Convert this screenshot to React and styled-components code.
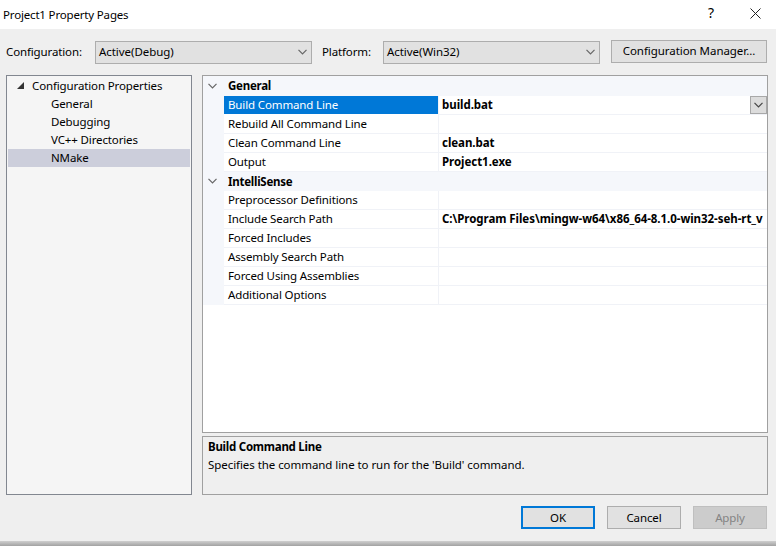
import React from 'react';
import styled, { createGlobalStyle } from 'styled-components';

const GlobalStyle = createGlobalStyle`
  html, body {
    margin: 0;
    padding: 0;
    background: #f0f0f0;
  }
  * {
    box-sizing: border-box;
  }
`;

const Dialog = styled.div`
  width: 776px;
  height: 546px;
  display: flex;
  flex-direction: column;
  overflow: hidden;
  background: #efefef;
  color: #000;
  font-family: 'Noto Sans', 'Open Sans', sans-serif;
  font-size: 11.5px;
  letter-spacing: -0.13px;
`;

const TitleBar = styled.div`
  height: 29px;
  flex: none;
  display: flex;
  align-items: center;
  padding-left: 3px;
  background: #fff;
`;

const TitleText = styled.span`
  flex: 1;
  margin-top: -1px;
  letter-spacing: -0.17px;
`;

const HelpGlyph = styled.span`
  width: 14px;
  margin-right: 32px;
  margin-top: -4px;
  text-align: center;
  font-size: 14px;
`;

const CloseGlyph = styled.svg`
  width: 11px;
  height: 11px;
  margin-right: 15px;
  margin-top: -3px;
`;

const Body = styled.div`
  flex: 1;
  display: flex;
  flex-direction: column;
  padding: 11px 8px 12px 6px;
  min-height: 0;
`;

const ConfigBar = styled.div`
  height: 24px;
  flex: none;
  display: flex;
  align-items: center;
`;

const ConfigLabel = styled.span`
  width: ${(props) => props.$width}px;
  flex: none;
  margin-top: -2px;
  padding-left: ${(props) => props.$indent || 0}px;
`;

const Select = styled.div`
  width: 217px;
  height: 23px;
  flex: none;
  display: flex;
  align-items: center;
  justify-content: space-between;
  padding: 0 4px 2px 3px;
  margin-top: 1px;
  letter-spacing: -0.05px;
  background: #e1e1e1;
  border: 1px solid #adadad;
`;

const Chevron = styled.svg`
  width: 9px;
  height: 6px;
  flex: none;
`;

const PushButton = styled.div`
  width: ${(props) => props.$width || 74}px;
  height: 23px;
  flex: none;
  display: flex;
  align-items: center;
  justify-content: center;
  background: #e1e1e1;
  border: ${(props) => (props.$primary ? '2px solid #0078d7' : '1px solid #adadad')};
  color: ${(props) => (props.$disabled ? '#838383' : '#000')};
  ${(props) => props.$disabled && 'background: #cccccc; border-color: #bfbfbf;'}
`;

const ManagerButton = styled(PushButton)`
  margin-left: 11px;
  margin-top: -1px;
  padding-bottom: 2px;
  letter-spacing: -0.05px;
`;

const Panels = styled.div`
  flex: 1;
  display: flex;
  gap: 10px;
  margin-top: 11px;
  min-height: 0;
`;

const TreePanel = styled.div`
  width: 186px;
  flex: none;
  padding: 1px;
  background: #f5f5f5;
  border: 1px solid #828790;
`;

const TreeRoot = styled.div`
  height: 18px;
  display: flex;
  align-items: center;
  padding-left: 9px;
  padding-bottom: 2px;
`;

const TreeArrow = styled.svg`
  width: 7px;
  height: 7px;
  margin-right: 8px;
`;

const TreeItem = styled.div`
  height: 18px;
  display: flex;
  align-items: center;
  padding-left: 43px;
  padding-bottom: 2px;
  background: ${(props) => (props.$selected ? '#cccedb' : 'transparent')};
`;

const RightColumn = styled.div`
  flex: 1;
  display: flex;
  flex-direction: column;
  gap: 3px;
  min-width: 0;
`;

const GridPanel = styled.div`
  height: 358px;
  flex: none;
  overflow: hidden;
  background: #fff;
  border: 1px solid #a0a0a0;
`;

const SectionRow = styled.div`
  height: ${(props) => props.$height}px;
  display: flex;
  align-items: center;
  padding-bottom: 1px;
  background: #f5f7fb;
  font-weight: 700;
  letter-spacing: -0.25px;
`;

const SectionToggle = styled.svg`
  width: 9px;
  height: 6px;
  margin-left: 5px;
  margin-right: 11px;
  flex: none;
`;

const PropRow = styled.div`
  height: 19px;
  display: flex;
  position: relative;
  background: #f5f7fb;
`;

const PropName = styled.div`
  width: 214px;
  flex: none;
  margin-left: 21px;
  padding-left: 4px;
  line-height: 17px;
  white-space: nowrap;
  background: ${(props) => (props.$selected ? '#0078d7' : '#fff')};
  color: ${(props) => (props.$selected ? '#fff' : '#000')};
  border-bottom: 1px solid ${(props) => (props.$selected ? '#fff' : '#f0f2f7')};
`;

const PropValue = styled.div`
  flex: 1;
  min-width: 0;
  padding-left: 3px;
  line-height: 17px;
  font-weight: 700;
  letter-spacing: -0.05px;
  white-space: nowrap;
  overflow: hidden;
  background: #fff;
  border-left: 1px solid #f0f2f7;
  border-bottom: 1px solid #f0f2f7;
`;

const DropButton = styled.div`
  position: absolute;
  top: 0;
  right: 0;
  width: 17px;
  height: 18px;
  display: flex;
  align-items: center;
  justify-content: center;
  background: #dcdcdc;
  border: 1px solid #a8a8a8;
`;

const DescPanel = styled.div`
  flex: 1;
  padding: 1px 5px;
  background: #efefef;
  border: 1px solid #a0a0a0;
`;

const DescTitle = styled.div`
  font-weight: 700;
  letter-spacing: -0.25px;
  line-height: 18px;
`;

const DescText = styled.div`
  line-height: 17px;
  letter-spacing: -0.06px;
`;

const Footer = styled.div`
  display: flex;
  flex: none;
  justify-content: flex-end;
  gap: 12px;
  margin-top: 11px;
  padding-right: 1px;
`;

const ShadowStrip = styled.div`
  height: 5px;
  flex: none;
  background: linear-gradient(#cfcfcf, #a2a2a2);
`;

const general = [
  { name: 'Build Command Line', value: 'build.bat', selected: true },
  { name: 'Rebuild All Command Line', value: '' },
  { name: 'Clean Command Line', value: 'clean.bat' },
  { name: 'Output', value: 'Project1.exe' },
];

const intellisense = [
  { name: 'Preprocessor Definitions', value: '' },
  { name: 'Include Search Path', value: 'C:\\Program Files\\mingw-w64\\x86_64-8.1.0-win32-seh-rt_v' },
  { name: 'Forced Includes', value: '' },
  { name: 'Assembly Search Path', value: '' },
  { name: 'Forced Using Assemblies', value: '' },
  { name: 'Additional Options', value: '' },
];

const ChevronIcon = ({ as: Comp = Chevron, color = '#666' }) => (
  <Comp viewBox="0 0 9 6">
    <path d="M0.5 0.8 L4.5 4.8 L8.5 0.8" fill="none" stroke={color} strokeWidth="1.2" />
  </Comp>
);

const Row = ({ item }) => (
  <PropRow>
    <PropName $selected={item.selected}>{item.name}</PropName>
    <PropValue>{item.value}</PropValue>
    {item.selected && (
      <DropButton>
        <ChevronIcon color="#444" />
      </DropButton>
    )}
  </PropRow>
);

const App = () => (
  <>
    <GlobalStyle />
    <Dialog>
      <TitleBar>
        <TitleText>Project1 Property Pages</TitleText>
        <HelpGlyph>?</HelpGlyph>
        <CloseGlyph viewBox="0 0 11 11">
          <path d="M0.5 0.5 L10.5 10.5 M10.5 0.5 L0.5 10.5" stroke="#222" strokeWidth="1" fill="none" />
        </CloseGlyph>
      </TitleBar>
      <Body>
        <ConfigBar>
          <ConfigLabel $width={89}>Configuration:</ConfigLabel>
          <Select>
            <span>Active(Debug)</span>
            <ChevronIcon />
          </Select>
          <ConfigLabel $width={71} $indent={10}>Platform:</ConfigLabel>
          <Select>
            <span>Active(Win32)</span>
            <ChevronIcon />
          </Select>
          <ManagerButton $width={156}>Configuration Manager...</ManagerButton>
        </ConfigBar>
        <Panels>
          <TreePanel>
            <TreeRoot>
              <TreeArrow viewBox="0 0 7 7">
                <path d="M7 0 L7 7 L0 7 Z" fill="#333" />
              </TreeArrow>
              Configuration Properties
            </TreeRoot>
            <TreeItem>General</TreeItem>
            <TreeItem>Debugging</TreeItem>
            <TreeItem>VC++ Directories</TreeItem>
            <TreeItem $selected>NMake</TreeItem>
          </TreePanel>
          <RightColumn>
            <GridPanel>
              <SectionRow $height={20}>
                <ChevronIcon as={SectionToggle} />
                General
              </SectionRow>
              {general.map((item) => (
                <Row key={item.name} item={item} />
              ))}
              <SectionRow $height={19}>
                <ChevronIcon as={SectionToggle} />
                IntelliSense
              </SectionRow>
              {intellisense.map((item) => (
                <Row key={item.name} item={item} />
              ))}
            </GridPanel>
            <DescPanel>
              <DescTitle>Build Command Line</DescTitle>
              <DescText>Specifies the command line to run for the 'Build' command.</DescText>
            </DescPanel>
          </RightColumn>
        </Panels>
        <Footer>
          <PushButton $primary>OK</PushButton>
          <PushButton>Cancel</PushButton>
          <PushButton $disabled>Apply</PushButton>
        </Footer>
      </Body>
      <ShadowStrip />
    </Dialog>
  </>
);

export default App;
